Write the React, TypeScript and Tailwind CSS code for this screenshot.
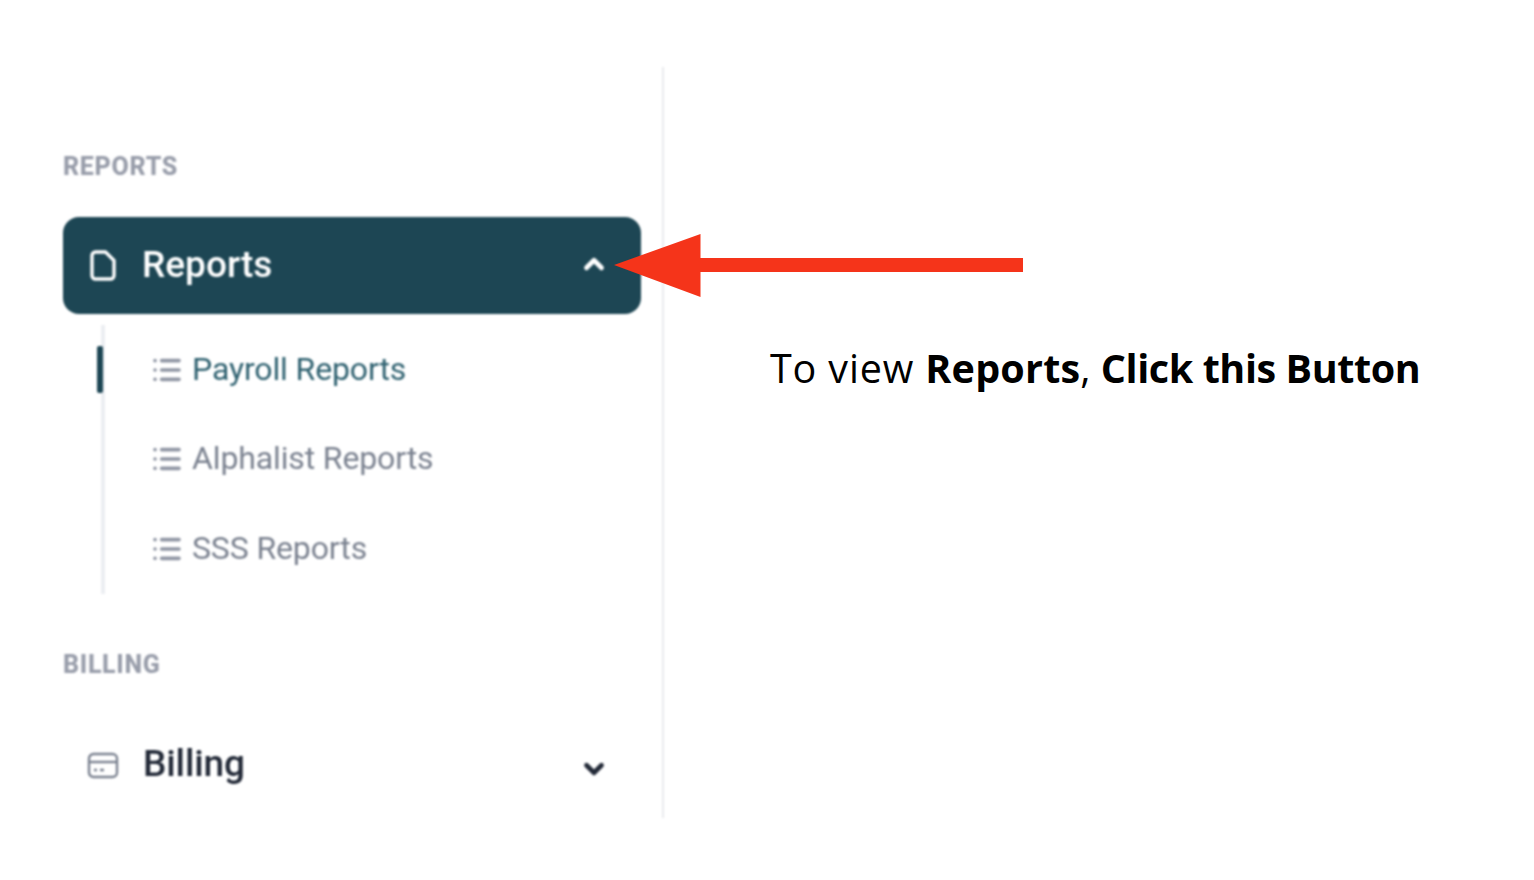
import { ChevronDown, ChevronUp, List } from "lucide-react";

const SUB_ITEMS = [
  { label: "Payroll Reports", active: true },
  { label: "Alphalist Reports", active: false },
  { label: "SSS Reports", active: false },
];

function SectionLabel({ children }: { children: string }) {
  return (
    <div className="h-[24px] pt-[1px] text-[25px] leading-[24px] font-extrabold tracking-[0.7px] text-[#989daa]">
      {children}
    </div>
  );
}

function ReportIcon() {
  return (
    <svg className="shrink-0" width="26" height="31" viewBox="0 0 26 31" fill="none" stroke="currentColor" strokeWidth="3.4" strokeLinejoin="round">
      <path d="M5.5 2 H15.5 L24 10.5 V25.5 a3.5 3.5 0 0 1 -3.5 3.5 H5.5 a3.5 3.5 0 0 1 -3.5 -3.5 V5.5 a3.5 3.5 0 0 1 3.5 -3.5 Z" />
    </svg>
  );
}

function CardIcon() {
  return (
    <svg className="mt-[4px] shrink-0" width="32" height="27" viewBox="0 0 32 27" fill="none" stroke="#7b8290" strokeWidth="2.4">
      <rect x="2" y="2" width="28" height="23" rx="4.5" />
      <path d="M2 10 H30" />
      <path d="M7 18 H10 M13 18 H17" strokeWidth="2.6" />
    </svg>
  );
}

export default function App() {
  return (
    <div className="relative h-[880px] w-[1534px] overflow-hidden bg-white font-['Roboto',sans-serif]">
      <div className="flex pt-[67px]">
        {/* Sidebar */}
        <aside className="h-[751px] w-[664px] shrink-0 border-r-2 border-[#eaebee] pl-[63px] pr-[21px] pt-[87px] blur-[0.8px]">
          <SectionLabel>REPORTS</SectionLabel>

          <div className="mt-[39px] flex h-[97px] items-center rounded-[16px] bg-[#1d4654] pl-[27px] pr-[32px] text-white">
            <ReportIcon />
            <span className="-mt-[2px] ml-[26px] flex-1 text-[37px] font-medium">Reports</span>
            <ChevronUp className="-mt-[3px] h-[30px] w-[30px]" strokeWidth={3.8} />
          </div>

          {/* Sub items */}
          <div className="relative ml-[38px] mt-[11px] w-[calc(100%-38px)] border-l-4 border-[#eceef2]">
            {SUB_ITEMS.map((item) => (
              <div key={item.label} className="relative flex h-[89.6px] items-center pl-[46px]">
                {item.active && (
                  <span className="absolute left-[-8px] top-[21px] h-[47px] w-[6px] rounded-[2px] bg-[#1d4654]" />
                )}
                <List className="h-[32px] w-[32px] shrink-0 text-[#8f95a3]" strokeWidth={2.7} />
                <span
                  className={`-mt-[2px] ml-[9px] text-[32px] tracking-[-0.13px] ${
                    item.active ? "text-[#2f6170]" : "text-[#7b8290]"
                  }`}
                >
                  {item.label}
                </span>
              </div>
            ))}
          </div>

          <div className="mt-[58px]">
            <SectionLabel>BILLING</SectionLabel>
          </div>

          <div className="mt-[39px] flex h-[97px] items-center pl-[24px] pr-[32px]">
            <CardIcon />
            <span className="ml-[24px] flex-1 text-[37px] font-medium tracking-[-0.1px] text-[#232a38]">Billing</span>
            <ChevronDown className="mt-[12px] h-[30px] w-[30px] text-[#232a38]" strokeWidth={3.8} />
          </div>
        </aside>

        {/* Caption */}
        <p className="ml-[106px] mt-[274px] whitespace-nowrap font-['Open_Sans',sans-serif] text-[39.5px] leading-[54px] text-black">
          <span className="tracking-[0.85px]">To view </span>
          <b className="tracking-[0.2px]">Reports</b>, <b className="tracking-[-0.42px]">Click this Button</b>
        </p>
      </div>

      {/* Arrow callout */}
      <svg className="absolute left-[610px] top-[230px]" width="416" height="70" viewBox="0 0 416 70">
        <path d="M4 35 L90.5 4 V28 H413 V42 H90.5 V67 Z" fill="#f5341a" />
      </svg>
    </div>
  );
}
